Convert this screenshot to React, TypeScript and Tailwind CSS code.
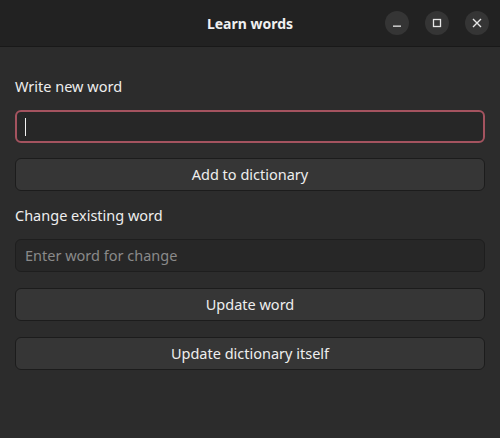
import React from 'react';

const font = { fontFamily: '"Noto Sans", "Open Sans", sans-serif' };

function WinButton({ children }: { children: React.ReactNode }) {
  return (
    <div className="flex h-6 w-6 items-center justify-center rounded-full bg-[#353535]">
      {children}
    </div>
  );
}

export default function App() {
  return (
    <div className="flex h-[438px] w-[500px] flex-col bg-[#2c2c2c] text-[#eeeeee]" style={font}>
      {/* Header bar */}
      <header className="relative flex h-[47px] shrink-0 items-center justify-center border-b border-[#191919] bg-[#222222]">
        <h1 className="text-[14px] font-bold text-[#f0f0f0]">Learn words</h1>
        <div className="absolute right-[11px] top-[11px] flex gap-4">
          <WinButton>
            <svg width="12" height="12" viewBox="0 0 12 12">
              <rect x="2" y="8.5" width="8" height="1.3" fill="#e6e6e6" />
            </svg>
          </WinButton>
          <WinButton>
            <svg width="12" height="12" viewBox="0 0 12 12">
              <rect x="2.5" y="2.5" width="7" height="7" fill="none" stroke="#e6e6e6" strokeWidth="1.3" />
            </svg>
          </WinButton>
          <WinButton>
            <svg width="12" height="12" viewBox="0 0 12 12">
              <path d="M2 2 L10 10 M10 2 L2 10" stroke="#e6e6e6" strokeWidth="1.4" />
            </svg>
          </WinButton>
        </div>
      </header>

      {/* Content */}
      <main className="flex flex-col px-[15px] pt-[29px]">
        <label className="h-5 text-[14.5px] leading-5 text-[#eeeeee]">Write new word</label>
        <div className="mt-[14px] flex h-[33px] items-center rounded-[6px] border-2 border-[#a4535f] bg-[#272727] px-[8px]">
          <div className="h-[18px] w-px bg-[#f2f2f2]" />
        </div>
        <button className="mt-[15px] h-[33px] rounded-[6px] border border-[#1c1c1c] bg-[#363636] text-[14.5px] text-[#eeeeee]">
          Add to dictionary
        </button>

        <label className="mt-[14px] h-5 text-[14.5px] leading-5 text-[#eeeeee]">Change existing word</label>
        <div className="mt-[14px] flex h-[33px] items-center rounded-[6px] border border-[#1e1e1e] bg-[#272727] px-[9px]">
          <span className="text-[14.5px] text-[#8a8a8a]">Enter word for change</span>
        </div>
        <button className="mt-[16px] h-[33px] rounded-[6px] border border-[#1c1c1c] bg-[#363636] text-[14.5px] text-[#eeeeee]">
          Update word
        </button>
        <button className="mt-[16px] h-[33px] rounded-[6px] border border-[#1c1c1c] bg-[#363636] text-[14.5px] text-[#eeeeee]">
          Update dictionary itself
        </button>
      </main>
    </div>
  );
}
